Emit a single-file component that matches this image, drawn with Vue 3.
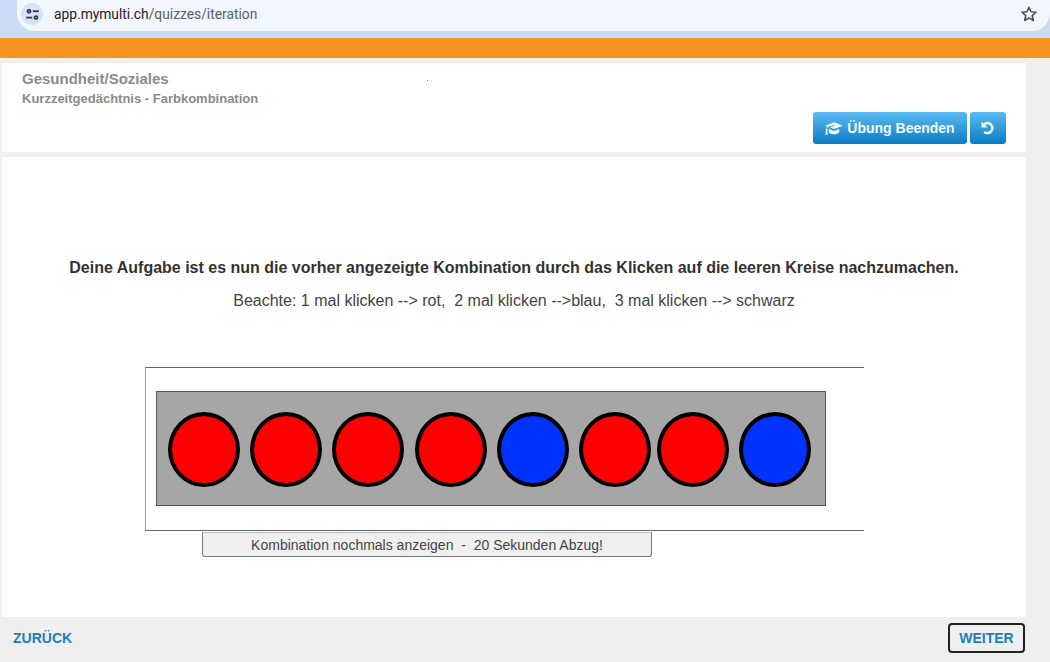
<script setup>
const circles = [
  { color: 'red' }, { color: 'red' }, { color: 'red' }, { color: 'red' },
  { color: 'blue' }, { color: 'red' }, { color: 'red', tight: true }, { color: 'blue' }
]
</script>

<template>
  <div class="page">
    <header class="browser">
      <div class="address">
        <span class="site-chip">
          <svg width="13" height="11" viewBox="0 0 13 11" fill="none" stroke="#2f3a4a" stroke-width="1.8">
            <circle cx="3" cy="2.2" r="1.5" />
            <path d="M6.8 2.2H12.8" />
            <path d="M0.2 8.6H6.2" />
            <circle cx="10" cy="8.6" r="1.5" />
          </svg>
        </span>
        <span class="url">app.mymulti.ch<span class="url-path">/quizzes/iteration</span></span>
        <svg class="star" width="18" height="18" viewBox="0 0 18 18" fill="none" stroke="#4b4f55" stroke-width="1.6" stroke-linejoin="round">
          <path d="M9 2.2l2 4.6 5 .45-3.8 3.3 1.15 4.9L9 12.85l-4.35 2.6 1.15-4.9L2 7.25l5-.45z" />
        </svg>
      </div>
    </header>
    <div class="orange"></div>

    <main class="content">
      <section class="head-card">
        <span class="speck"></span>
        <h1 class="title">Gesundheit/Soziales</h1>
        <h2 class="subtitle">Kurzzeitgedächtnis - Farbkombination</h2>
        <div class="actions">
          <button class="blue-btn end-btn">
            <svg width="18" height="13" viewBox="0 0 18 13" fill="#f2faff">
              <path d="M9 0.3L0 3.7l2.2.8c-.5.7-.8 1.5-.9 2.4-.4.2-.6.5-.6.9 0 .3.1.6.4.8L.3 12.6h2.6l-.8-3.9c.2-.2.4-.5.4-.8 0-.4-.2-.7-.5-.9.1-.8.4-1.5 1-2.1L9 3.1c.3-.1.5 0 .6.2 0 .2-.1.4-.3.5L5 5.6 9 7.1l9-3.4z" />
              <path d="M3.8 6.9v3.2c0 1.1 2.3 2.2 5.2 2.2s5.2-1.1 5.2-2.2V6.9L9 8.9z" />
            </svg>
            Übung Beenden
          </button>
          <button class="blue-btn undo-btn" aria-label="Zurücksetzen">
            <svg width="14" height="14" viewBox="0 0 14 14" fill="none" stroke="#f2faff" stroke-width="2.5">
              <path d="M3 3.4A5 5 0 1 1 3.2 11" />
              <path d="M0.5 0.5v6h6z" fill="#f2faff" stroke="none" />
            </svg>
          </button>
        </div>
      </section>

      <section class="task-card">
        <p class="lead">Deine Aufgabe ist es nun die vorher angezeigte Kombination durch das Klicken auf die leeren Kreise nachzumachen.</p>
        <p class="hint">Beachte: 1 mal klicken --&gt; rot,&nbsp; 2 mal klicken --&gt;blau,&nbsp; 3 mal klicken --&gt; schwarz</p>

        <div class="stage">
          <div class="board">
            <span
              v-for="(c, i) in circles"
              :key="i"
              class="circle"
              :class="[c.color, { tight: c.tight }]"
            ></span>
          </div>
        </div>
        <button class="replay">Kombination nochmals anzeigen&nbsp; -&nbsp; 20 Sekunden Abzug!</button>
      </section>

      <footer class="footer">
        <a class="back">ZURÜCK</a>
        <button class="next">WEITER</button>
      </footer>
    </main>
  </div>
</template>

<style>
html, body { margin: 0; background: #efefef; }
</style>

<style scoped>
.page {
  width: 1050px;
  height: 662px;
  overflow: hidden;
  background: #efefef;
  font-family: "Liberation Sans", Arial, sans-serif;
}
.browser {
  height: 38px;
  box-sizing: border-box;
  padding-bottom: 7px;
  background: #cbdaf5;
}
.address {
  height: 31px;
  margin-left: 17px;
  display: flex;
  align-items: center;
  background: #f2f6fd;
  border-radius: 0 0 18px 18px;
}
.site-chip {
  width: 22px;
  height: 22px;
  margin: -3px 0 0 4px;
  border-radius: 50%;
  display: flex;
  align-items: center;
  justify-content: center;
  background: #d6e2f7;
}
.url {
  margin-left: 11px;
  margin-top: -3px;
  font-family: "Roboto", "Liberation Sans", sans-serif;
  font-size: 13.8px;
  color: #1f2023;
}
.url-path { color: #5a5f66; }
.star { margin-left: auto; margin-right: 12px; margin-top: -3px; }
.orange {
  height: 20px;
  background: #f7941e;
}
.content {
  padding: 5px 24px 0 2px;
}
.head-card {
  position: relative;
  height: 89px;
  box-sizing: border-box;
  padding: 8px 20px 0;
  background: #fff;
}
.speck {
  position: absolute;
  left: 425px;
  top: 17px;
  width: 1px;
  height: 1px;
  background: #777;
}
.title {
  margin: 0;
  font-size: 15px;
  line-height: 16px;
  font-weight: 700;
  color: #8a8a8a;
}
.subtitle {
  margin: 4px 0 0;
  font-size: 13px;
  line-height: 15px;
  font-weight: 700;
  color: #8a8a8a;
}
.actions {
  display: flex;
  justify-content: flex-end;
  gap: 3px;
  margin: 6px 0 0;
}
.blue-btn {
  height: 32px;
  padding: 0;
  border: 0;
  border-radius: 3px;
  display: flex;
  align-items: center;
  justify-content: center;
  background: linear-gradient(#5bbaf3, #0a7dc2);
  color: #f2faff;
  font-family: inherit;
  font-size: 14px;
  font-weight: 700;
}
.end-btn { width: 154px; gap: 4px; }
.undo-btn { width: 36px; }
.task-card {
  height: 460px;
  box-sizing: border-box;
  margin-top: 5px;
  padding-top: 101px;
  background: #fff;
}
.lead {
  margin: 0;
  text-align: center;
  font-size: 16px;
  line-height: 20px;
  font-weight: 700;
  color: #333;
}
.hint {
  margin: 13px 0 0;
  text-align: center;
  font-size: 16px;
  line-height: 20px;
  color: #444;
}
.stage {
  width: 719px;
  height: 164px;
  box-sizing: border-box;
  margin: 56px 0 0 143px;
  padding: 23px 0 0 10px;
  border: 1px solid #666;
  border-left-color: #999;
  border-right: 0;
}
.board {
  width: 670px;
  height: 115px;
  box-sizing: border-box;
  padding: 20px 0 0 11px;
  display: flex;
  gap: 10.2px;
  align-items: flex-start;
  border: 1px solid #555;
  background: #a6a6a6;
}
.circle {
  width: 72px;
  height: 75px;
  box-sizing: border-box;
  flex: none;
  border: 4px solid #000;
  border-radius: 50%;
}
.circle.tight { margin-left: -4.2px; }
.red { background: #ff0000; }
.blue { background: #0033ff; }
.replay {
  display: block;
  width: 450px;
  height: 25px;
  margin: 1px 0 0 200px;
  padding: 0;
  border: 1px solid #777;
  border-top-color: #bbb;
  border-radius: 0 0 3px 3px;
  background: #efefef;
  color: #444;
  font-family: inherit;
  font-size: 14px;
}
.footer {
  display: flex;
  align-items: center;
  justify-content: space-between;
  box-sizing: border-box;
  height: 45px;
  padding: 0 1px 4px 11px;
}
.back {
  font-size: 14px;
  font-weight: 700;
  color: #1b80bd;
}
.next {
  width: 77px;
  height: 30px;
  padding: 0;
  border: 2px solid #222;
  border-radius: 4px;
  background: #efefef;
  color: #1b80bd;
  font-family: inherit;
  font-size: 14px;
  font-weight: 700;
}
</style>
